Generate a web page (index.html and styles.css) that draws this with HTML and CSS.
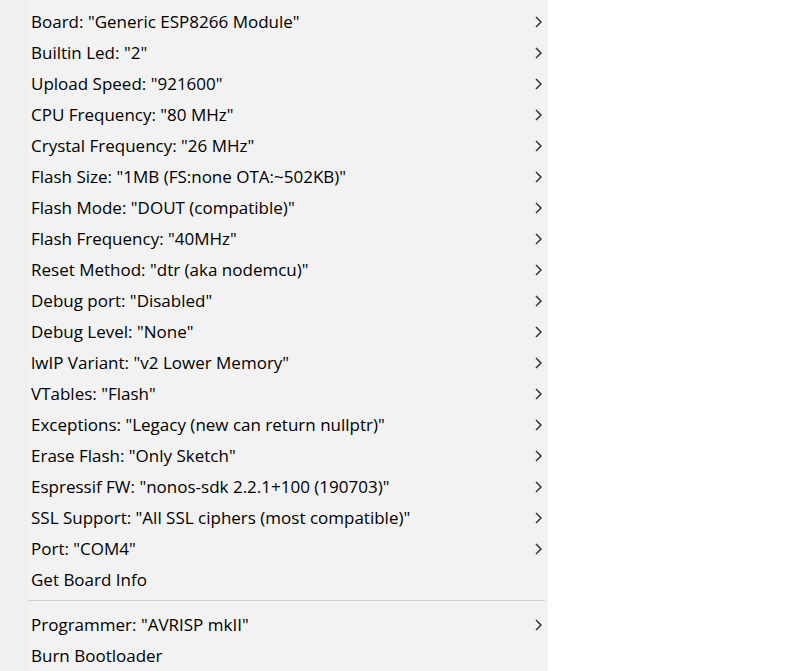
FILE: index.html
```html
<!DOCTYPE html>
<html>
<head>
<meta charset="utf-8">
<link rel="stylesheet" href="styles.css">
</head>
<body>
<div class="menu">
  <div class="item"><span class="label">Board: "Generic ESP8266 Module"</span><svg class="chev" viewBox="0 0 7 12"><polyline points="1,1 6,6 1,11"/></svg></div>
  <div class="item"><span class="label">Builtin Led: "2"</span><svg class="chev" viewBox="0 0 7 12"><polyline points="1,1 6,6 1,11"/></svg></div>
  <div class="item"><span class="label">Upload Speed: "921600"</span><svg class="chev" viewBox="0 0 7 12"><polyline points="1,1 6,6 1,11"/></svg></div>
  <div class="item"><span class="label">CPU Frequency: "80 MHz"</span><svg class="chev" viewBox="0 0 7 12"><polyline points="1,1 6,6 1,11"/></svg></div>
  <div class="item"><span class="label">Crystal Frequency: "26 MHz"</span><svg class="chev" viewBox="0 0 7 12"><polyline points="1,1 6,6 1,11"/></svg></div>
  <div class="item"><span class="label">Flash Size: "1MB (FS:none OTA:~502KB)"</span><svg class="chev" viewBox="0 0 7 12"><polyline points="1,1 6,6 1,11"/></svg></div>
  <div class="item"><span class="label">Flash Mode: "DOUT (compatible)"</span><svg class="chev" viewBox="0 0 7 12"><polyline points="1,1 6,6 1,11"/></svg></div>
  <div class="item"><span class="label">Flash Frequency: "40MHz"</span><svg class="chev" viewBox="0 0 7 12"><polyline points="1,1 6,6 1,11"/></svg></div>
  <div class="item"><span class="label">Reset Method: "dtr (aka nodemcu)"</span><svg class="chev" viewBox="0 0 7 12"><polyline points="1,1 6,6 1,11"/></svg></div>
  <div class="item"><span class="label">Debug port: "Disabled"</span><svg class="chev" viewBox="0 0 7 12"><polyline points="1,1 6,6 1,11"/></svg></div>
  <div class="item"><span class="label">Debug Level: "None"</span><svg class="chev" viewBox="0 0 7 12"><polyline points="1,1 6,6 1,11"/></svg></div>
  <div class="item"><span class="label">lwIP Variant: "v2 Lower Memory"</span><svg class="chev" viewBox="0 0 7 12"><polyline points="1,1 6,6 1,11"/></svg></div>
  <div class="item"><span class="label">VTables: "Flash"</span><svg class="chev" viewBox="0 0 7 12"><polyline points="1,1 6,6 1,11"/></svg></div>
  <div class="item"><span class="label">Exceptions: "Legacy (new can return nullptr)"</span><svg class="chev" viewBox="0 0 7 12"><polyline points="1,1 6,6 1,11"/></svg></div>
  <div class="item"><span class="label">Erase Flash: "Only Sketch"</span><svg class="chev" viewBox="0 0 7 12"><polyline points="1,1 6,6 1,11"/></svg></div>
  <div class="item"><span class="label">Espressif FW: "nonos-sdk 2.2.1+100 (190703)"</span><svg class="chev" viewBox="0 0 7 12"><polyline points="1,1 6,6 1,11"/></svg></div>
  <div class="item"><span class="label">SSL Support: "All SSL ciphers (most compatible)"</span><svg class="chev" viewBox="0 0 7 12"><polyline points="1,1 6,6 1,11"/></svg></div>
  <div class="item"><span class="label">Port: "COM4"</span><svg class="chev" viewBox="0 0 7 12"><polyline points="1,1 6,6 1,11"/></svg></div>
  <div class="item"><span class="label">Get Board Info</span></div>
  <div class="sep"></div>
  <div class="item"><span class="label">Programmer: "AVRISP mkII"</span><svg class="chev" viewBox="0 0 7 12"><polyline points="1,1 6,6 1,11"/></svg></div>
  <div class="item"><span class="label">Burn Bootloader</span></div>
</div>
</body>
</html>
```
FILE: styles.css
```css
html, body {
  margin: 0;
  padding: 0;
  background: #ffffff;
}
.menu {
  width: 548px;
  height: 671px;
  box-sizing: border-box;
  padding-top: 6px;
  background: linear-gradient(to right, #f0f0f0 0, #f0f0f0 27px, #f2f2f2 27px);
  font-family: "Open Sans", "Noto Sans", sans-serif;
  font-size: 17px;
  color: #000;
}
.item {
  height: 31px;
  display: flex;
  align-items: center;
  padding-left: 31px;
  padding-right: 5px;
}
.label {
  flex: 1;
  white-space: nowrap;
}
.chev {
  width: 7px;
  height: 12px;
  margin-right: 1px;
  fill: none;
  stroke: #333;
  stroke-width: 1.5;
}
.sep {
  height: 14px;
  box-sizing: border-box;
  padding-top: 5px;
  padding-left: 28px;
  padding-right: 3px;
}
.sep::before {
  content: "";
  display: block;
  height: 1px;
  background: #d0d0d0;
}
```
